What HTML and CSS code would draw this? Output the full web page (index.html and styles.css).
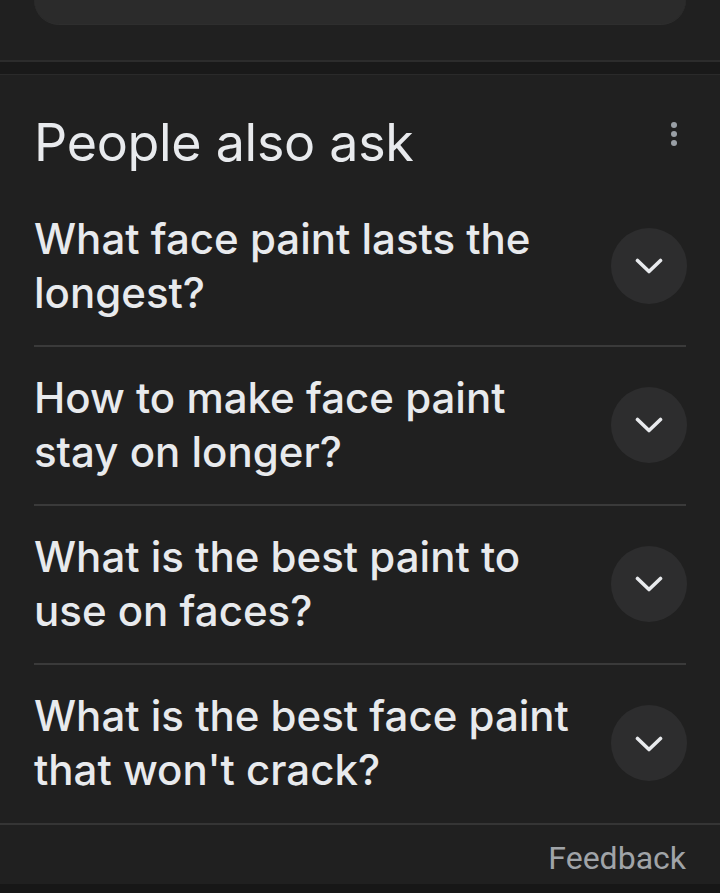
FILE: index.html
```html
<!DOCTYPE html>
<html lang="en">
<head>
<meta charset="utf-8">
<title>People also ask</title>
<link rel="stylesheet" href="styles.css">
</head>
<body>
<div class="prev">
  <div class="prev-card"></div>
</div>
<div class="band"></div>
<section class="paa">
  <div class="paa-head">
    <h2 class="paa-title">People also ask</h2>
    <div class="dots" aria-label="More options"><span></span><span></span><span></span></div>
  </div>
  <div class="q-list">
    <div class="q-item">
      <div class="q-text">What face paint lasts the longest?</div>
      <div class="q-btn"><svg width="28" height="16" viewBox="0 0 28 16"><polyline points="2.5,2.5 14,13.5 25.5,2.5" fill="none" stroke="#e8eaed" stroke-width="3.6" stroke-linecap="round" stroke-linejoin="round"/></svg></div>
    </div>
    <div class="q-item">
      <div class="q-text">How to make face paint stay on longer?</div>
      <div class="q-btn"><svg width="28" height="16" viewBox="0 0 28 16"><polyline points="2.5,2.5 14,13.5 25.5,2.5" fill="none" stroke="#e8eaed" stroke-width="3.6" stroke-linecap="round" stroke-linejoin="round"/></svg></div>
    </div>
    <div class="q-item">
      <div class="q-text">What is the best paint to use on faces?</div>
      <div class="q-btn"><svg width="28" height="16" viewBox="0 0 28 16"><polyline points="2.5,2.5 14,13.5 25.5,2.5" fill="none" stroke="#e8eaed" stroke-width="3.6" stroke-linecap="round" stroke-linejoin="round"/></svg></div>
    </div>
    <div class="q-item">
      <div class="q-text">What is the best face paint that won't crack?</div>
      <div class="q-btn"><svg width="28" height="16" viewBox="0 0 28 16"><polyline points="2.5,2.5 14,13.5 25.5,2.5" fill="none" stroke="#e8eaed" stroke-width="3.6" stroke-linecap="round" stroke-linejoin="round"/></svg></div>
    </div>
  </div>
  <div class="paa-foot">Feedback</div>
</section>
<div class="bottom-band"></div>
</body>
</html>
```

FILE: styles.css
```css
html, body {
  margin: 0;
  padding: 0;
  background: #202020;
}
body {
  font-family: Inter, "Open Sans", sans-serif;
  color: #e8eaed;
  overflow: hidden;
}
.prev {
  height: 60px;
  border-bottom: 2px solid #2c2c2c;
  padding: 0 34px;
  box-sizing: content-box;
}
.prev-card {
  height: 25px;
  background: #2b2b2b;
  border-radius: 0 0 38px 38px;
  border-bottom: 1px solid #2e2e2e;
  box-sizing: border-box;
}
.band {
  height: 12px;
  background: #191919;
}
.paa {
  border-top: 1px solid #2a2a2a;
  background: #202020;
}
.paa-head {
  display: flex;
  justify-content: space-between;
  align-items: flex-start;
  height: 113px;
  box-sizing: border-box;
  padding: 36px 34px 0 34px;
}
.paa-title {
  margin: 0;
  font-size: 52px;
  font-weight: 400;
  line-height: 64px;
  letter-spacing: -0.3px;
  color: #e8eaed;
}
.dots {
  display: flex;
  flex-direction: column;
  gap: 3px;
  margin-top: 11px;
  margin-right: 9px;
}
.dots span {
  width: 6px;
  height: 6px;
  border-radius: 50%;
  background: #9aa0a6;
}
.q-list {
  padding: 0 34px;
}
.q-item {
  display: flex;
  align-items: center;
  justify-content: space-between;
  height: 159px;
  box-sizing: border-box;
  border-bottom: 2px solid #3a3a3a;
  padding-bottom: 2px;
}
.q-item:last-child {
  border-bottom: none;
  height: 158px;
}
.q-text {
  width: 545px;
  font-size: 42px;
  line-height: 54px;
  font-weight: 500;
  color: #e8eaed;
}
.q-btn {
  flex: none;
  width: 76px;
  height: 76px;
  border-radius: 50%;
  background: #2d2d2e;
  display: flex;
  align-items: center;
  justify-content: center;
  margin-right: -1px;
}
.q-btn svg {
  display: block;
  margin-top: 1px;
}
.paa-foot {
  border-top: 2px solid #353535;
  height: 61px;
  box-sizing: border-box;
  padding: 6px 34px 0 34px;
  line-height: 55px;
  text-align: right;
  font-family: Roboto, "Liberation Sans", sans-serif;
  font-size: 32px;
  color: #a0a4a8;
}
.bottom-band {
  height: 10px;
  background: #171717;
}
```
